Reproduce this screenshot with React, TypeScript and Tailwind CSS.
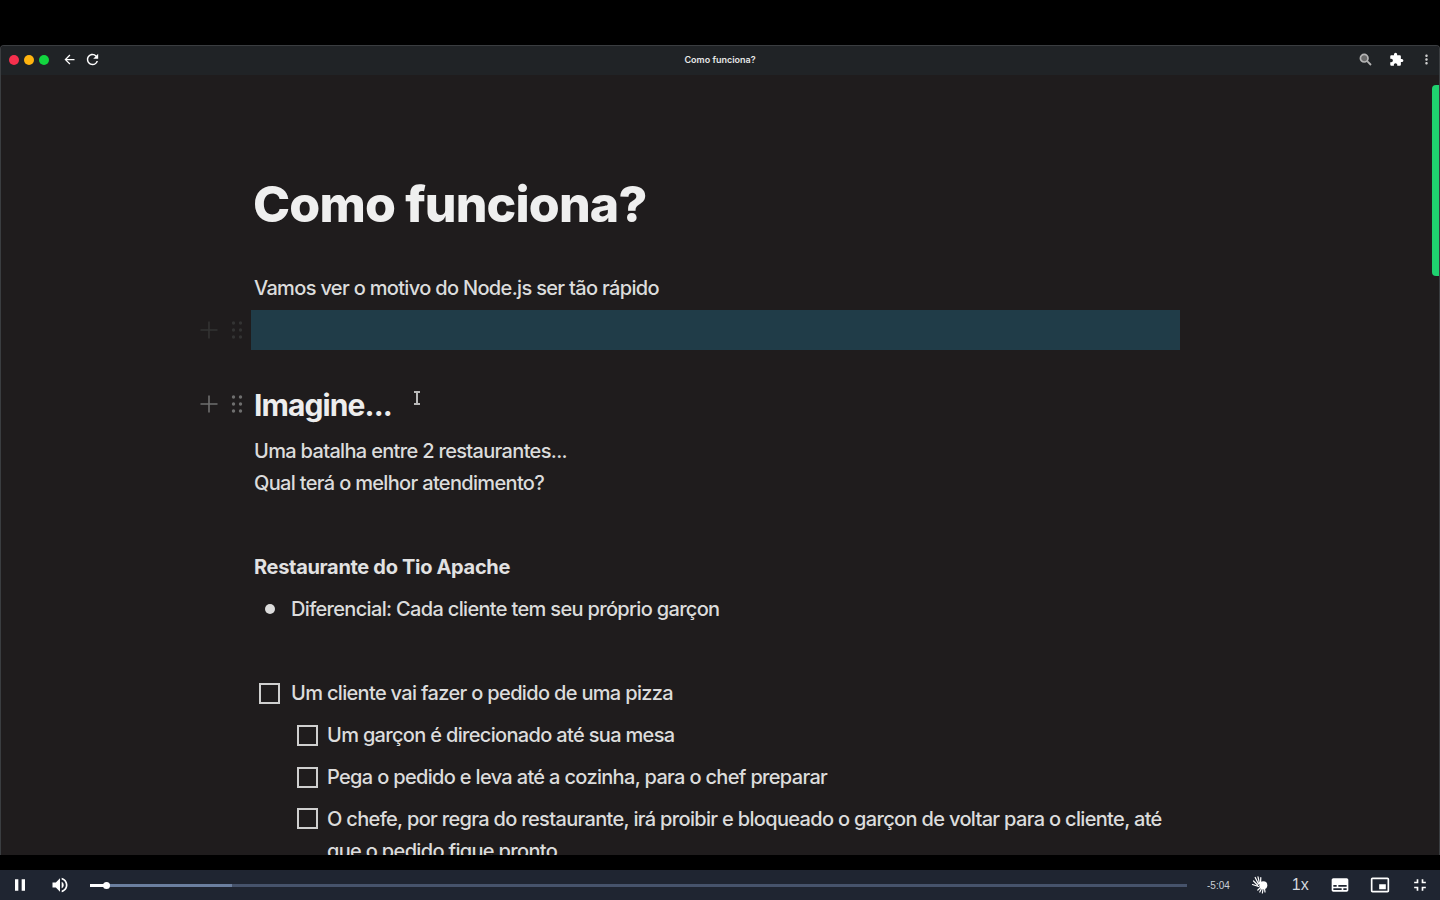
import type { ReactNode } from "react";
import {
  MdArrowBack,
  MdRefresh,
  MdExtension,
  MdMoreVert,
  MdPause,
  MdVolumeUp,
  MdSubtitles,
  MdPictureInPictureAlt,
  MdFullscreenExit,
} from "react-icons/md";

function Handle({ faded }: { faded?: boolean }) {
  const color = faded ? "#333333" : "#6f6f6f";
  return (
    <div className="flex w-[54px] shrink-0 items-center">
      <svg width="18" height="18" viewBox="0 0 18 18">
        <path d="M9 0.5V17.5M0.5 9H17.5" stroke={color} strokeWidth="1.6" />
      </svg>
      <svg width="12" height="20" viewBox="0 0 12 20" className="ml-[13px]">
        {[3, 10, 17].map((y) => (
          <g key={y} fill={color}>
            <circle cx="2.5" cy={y} r="1.7" />
            <circle cx="9.5" cy={y} r="1.7" />
          </g>
        ))}
      </svg>
    </div>
  );
}

function Checkbox() {
  return <span className="block h-[21px] w-[21px] shrink-0 border-2 border-[#cfcfcf]" />;
}

function TodoRow({ nested, children }: { nested?: boolean; children: ReactNode }) {
  return (
    <div className={`flex h-[42px] items-center ${nested ? "ml-[97px] gap-[9px]" : "ml-[59px] gap-[11px]"}`}>
      <Checkbox />
      <span>{children}</span>
    </div>
  );
}

function ZoomIcon() {
  return (
    <svg width="13" height="13" viewBox="0 0 13 13">
      <circle cx="5.2" cy="5.2" r="3.8" fill="#6a6a6a" stroke="#b4b4b4" strokeWidth="1.7" />
      <path d="M8.2 8.2L12 12" stroke="#b4b4b4" strokeWidth="1.8" />
    </svg>
  );
}

function HandsIcon() {
  return (
    <svg width="18" height="18" viewBox="0 0 18 18" fill="none" stroke="#ffffff" strokeLinecap="round">
      <path d="M7.5 8L4.2 1.5M8.5 7.5L7 0.8M9.5 7.5L9.8 1.6M6.5 9L2.5 5M7.5 10.5L1.5 8.5" strokeWidth="1.2" />
      <circle cx="12.3" cy="9.3" r="4" fill="#ffffff" stroke="none" />
      <path d="M9.5 11.5L6.8 14M10.5 12.5L8.8 16M12 13L11.4 17M13.5 12.5L14 16" strokeWidth="1.2" />
    </svg>
  );
}

export default function App() {
  return (
    <div className="flex h-[900px] w-[1440px] flex-col overflow-hidden bg-black font-['Inter',sans-serif]">
      {/* Browser window */}
      <div className="mt-[45px] flex h-[810px] flex-col overflow-hidden rounded-t-[4px] border border-b-0 border-[#3a3d40] bg-[#1f1c1d]">
        <header className="flex h-[29px] shrink-0 items-center bg-[#202326] pb-[2px] pl-[8px] pr-[5px] text-white">
          <div className="flex gap-[5px]">
            <span className="h-[10px] w-[10px] rounded-full bg-[#f5304d]" />
            <span className="h-[10px] w-[10px] rounded-full bg-[#ffb40f]" />
            <span className="h-[10px] w-[10px] rounded-full bg-[#12d53f]" />
          </div>
          <MdArrowBack className="ml-[13px] text-[15px]" />
          <MdRefresh className="ml-[7px] text-[17px]" />
          <span className="flex-1 pr-[20px] text-center text-[9px] font-semibold text-[#e6e6e6]">Como funciona?</span>
          <ZoomIcon />
          <MdExtension className="ml-[17px] text-[15px] text-white" />
          <MdMoreVert className="ml-[15px] text-[15px] text-[#cfcfcf]" />
        </header>

        {/* Page */}
        <main className="relative flex-1 overflow-hidden pl-[199px] text-[20px] font-medium tracking-[-0.67px] text-[#dcdcdc]">
          <div className="absolute right-0 top-[10px] h-[191px] w-[7px] rounded-l-[4px] bg-[#1fd16f]" />
          <svg width="8" height="14" viewBox="0 0 8 14" className="absolute left-[412px] top-[316px]">
            <path d="M1 1H7M4 1V13M1 13H7" stroke="#b9b9b9" strokeWidth="2" fill="none" />
          </svg>

          <h1 className="ml-[53px] mt-[99px] h-[60px] text-[50px] font-extrabold leading-[60px] tracking-[-0.85px] text-[#efefef]">
            Como funciona?
          </h1>
          <p className="ml-[54px] mt-[38px] h-[32px] leading-[32px]">Vamos ver o motivo do Node.js ser tão rápido</p>

          <div className="mt-[6px] flex h-[40px] items-center">
            <Handle faded />
            <div className="ml-[-3px] h-[40px] w-[929px] bg-[#203c48]" />
          </div>

          <div className="relative mt-[35px] flex h-[40px] items-center">
            <div className="mt-[-3px]">
              <Handle />
            </div>
            <h2 className="text-[30px] font-bold tracking-[-0.9px] text-[#ededed]">Imagine...</h2>
          </div>

          <div className="ml-[54px] mt-[10px] leading-[32px]">
            <p>Uma batalha entre 2 restaurantes...</p>
            <p>Qual terá o melhor atendimento?</p>
          </div>

          <p className="ml-[54px] mt-[52px] h-[32px] font-bold leading-[32px] tracking-[-0.32px] text-[#e2e2e2]">Restaurante do Tio Apache</p>

          <div className="ml-[65px] mt-[10px] flex h-[32px] items-center gap-[16px]">
            <span className="h-[10px] w-[10px] rounded-full bg-[#dcdcdc]" />
            <span>Diferencial: Cada cliente tem seu próprio garçon</span>
          </div>

          <div className="mt-[47px]">
            <TodoRow>Um cliente vai fazer o pedido de uma pizza</TodoRow>
            <TodoRow nested>Um garçon é direcionado até sua mesa</TodoRow>
            <TodoRow nested>Pega o pedido e leva até a cozinha, para o chef preparar</TodoRow>
            <div className="ml-[97px] mt-[5px] flex gap-[9px] leading-[32px]">
              <span className="mt-[5px]"><Checkbox /></span>
              <span className="w-[850px]">
                O chefe, por regra do restaurante, irá proibir e bloqueado o garçon de voltar para o cliente, até que o pedido fique pronto
              </span>
            </div>
          </div>
        </main>
      </div>

      <div className="h-[15px] shrink-0 bg-black" />

      {/* Video controls */}
      <footer className="flex h-[30px] shrink-0 items-center bg-[#1f2531] text-white">
        <MdPause className="ml-[10px] text-[20px]" />
        <MdVolumeUp className="ml-[20px] text-[20px]" />
        <div className="relative ml-[20px] h-[3px] w-[1097px] bg-[#46536b]">
          <div className="absolute inset-y-0 left-0 w-[142px] bg-[#6b7f9f]" />
          <div className="absolute inset-y-0 left-0 w-[17px] bg-white" />
          <div className="absolute left-[13px] top-[-2px] h-[7px] w-[7px] rounded-full bg-white" />
        </div>
        <span className="ml-[20px] font-['Liberation_Sans',sans-serif] text-[10px] text-[#c9ced6]">-5:04</span>
        <span className="ml-[21px]"><HandsIcon /></span>
        <span className="ml-[23px] w-[16px] font-['Liberation_Sans',sans-serif] text-[16px] text-[#d4d8de]">1x</span>
        <MdSubtitles className="ml-[22px] text-[20px]" />
        <MdPictureInPictureAlt className="ml-[20px] text-[20px]" />
        <MdFullscreenExit className="ml-[20px] text-[20px]" />
      </footer>
    </div>
  );
}
